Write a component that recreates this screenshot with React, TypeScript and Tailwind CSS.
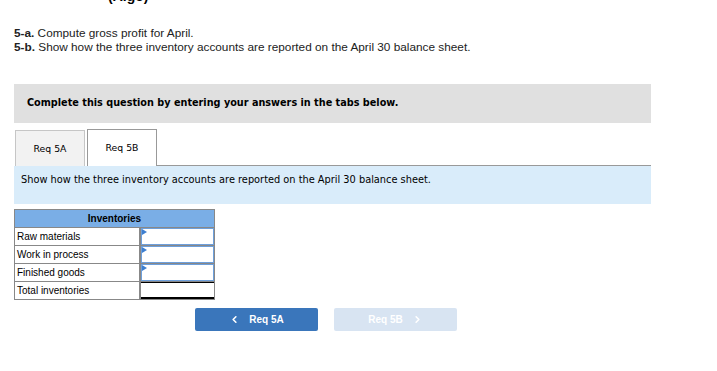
import React from 'react';
import { ChevronLeft, ChevronRight } from 'lucide-react';

const rows = [
  { label: 'Raw materials', input: true },
  { label: 'Work in process', input: true },
  { label: 'Finished goods', input: true },
  { label: 'Total inventories', input: false },
];

function InputCell() {
  return (
    <div className="relative h-full border border-[#6d9fdb] bg-white">
      {/* little flag in the corner */}
      <span className="absolute left-0 top-0 h-0 w-0 border-y-[3px] border-l-[5px] border-y-transparent border-l-[#3d7fd0]" />
    </div>
  );
}

export default function App() {
  return (
    <div className="min-h-[371px] w-[717px] bg-white text-black">
      {/* clipped heading above the fold */}
      <div className="h-[4px] overflow-hidden">
        <div className="-mt-[12px] pl-[108px] text-[14px] font-bold leading-[16px] font-['Liberation_Sans',sans-serif]">
          (Algo)
        </div>
      </div>

      <div className="ml-[14px] mt-[22px] text-[11.8px] leading-[14px] text-[#222] font-['Liberation_Sans',sans-serif]">
        <p><span className="font-bold">5-a.</span> Compute gross profit for April.</p>
        <p><span className="font-bold">5-b.</span> Show how the three inventory accounts are reported on the April 30 balance sheet.</p>
      </div>

      <div className="ml-[14px] w-[637px] font-['DejaVu_Sans',Verdana,sans-serif]">
        <div className="mt-[30px] flex h-[39px] items-center bg-[#e0e0e0] pl-[13px] text-[9.7px] font-bold">
          Complete this question by entering your answers in the tabs below.
        </div>

        {/* tabs */}
        <div className="mt-[6px] flex h-[37px] items-end">
          <button className="ml-[1px] flex h-[36px] w-[70px] items-center justify-center border border-b-0 border-[#c6c6c6] bg-[#f2f2f2] text-[9.3px]">
            Req 5A
          </button>
          <button className="ml-[2px] flex h-[37px] w-[70px] items-center justify-center border border-b-0 border-[#999999] bg-white text-[9.3px]">
            Req 5B
          </button>
          <div className="flex-1 border-b border-[#999999]" />
        </div>

        <div className="h-[38px] bg-[#d9ecfa] pl-[7px] pt-[8px] text-[9.8px] leading-[12px]">
          Show how the three inventory accounts are reported on the April 30 balance sheet.
        </div>
      </div>

      {/* inventories table */}
      <div className="ml-[14px] mt-[5px] w-[201px] border border-[#888888] text-[10px] font-['Liberation_Sans',sans-serif]">
        <div className="flex h-[17px] items-center justify-center bg-[#7aaee6] font-bold">Inventories</div>
        {rows.map((r) => (
          <div key={r.label} className="flex h-[18px] border-t border-[#888888]">
            <div className="flex w-[126px] items-center border-r-2 border-[#888888] pl-[2px]">{r.label}</div>
            <div className="flex-1">
              {r.input ? (
                <InputCell />
              ) : (
                <div className="h-full border-t border-b-2 border-black" />
              )}
            </div>
          </div>
        ))}
      </div>

      {/* nav buttons */}
      <div className="ml-[195px] mt-[8px] flex gap-[16px] font-['Liberation_Sans',sans-serif] text-[10px] font-bold text-white">
        <button className="flex h-[23px] w-[123px] items-center justify-center gap-[9px] rounded-[2px] bg-[#3a76bb]">
          <ChevronLeft size={11} strokeWidth={3.5} />
          Req 5A
        </button>
        <button className="flex h-[23px] w-[123px] items-center justify-center gap-[9px] rounded-[2px] bg-[#d8e4f2]">
          Req 5B
          <ChevronRight size={11} strokeWidth={3.5} />
        </button>
      </div>
    </div>
  );
}
